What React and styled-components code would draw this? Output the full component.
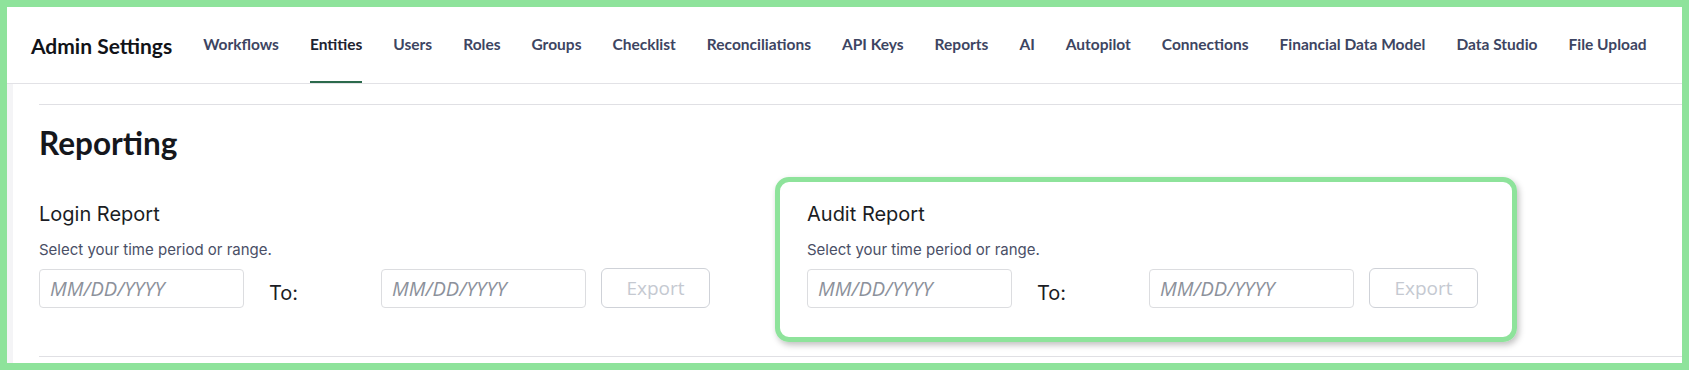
import React from 'react'
import styled, { createGlobalStyle } from 'styled-components'

const tabs = [
  'Workflows', 'Entities', 'Users', 'Roles', 'Groups', 'Checklist',
  'Reconciliations', 'API Keys', 'Reports', 'AI', 'Autopilot',
  'Connections', 'Financial Data Model', 'Data Studio', 'File Upload'
]

const reports = [
  { title: 'Login Report', highlighted: false },
  { title: 'Audit Report', highlighted: true }
]

export default function App () {
  return (
    <>
      <GlobalStyle />
      <Frame>
        <Header>
          <HeaderTitle>Admin Settings</HeaderTitle>
          <Tabs>
            {tabs.map(tab => (
              <Tab key={tab} active={tab === 'Entities'}>{tab}</Tab>
            ))}
          </Tabs>
        </Header>
        <Body>
          <Strip />
          <Content>
            <Rule />
            <PageTitle>Reporting</PageTitle>
            <Columns>
              {reports.map(report => (
                <ReportBlock key={report.title} highlighted={report.highlighted}>
                  <ReportTitle>{report.title}</ReportTitle>
                  <ReportHint>Select your time period or range.</ReportHint>
                  <DateRow>
                    <DateInput placeholder='MM/DD/YYYY' />
                    <ToLabel>To:</ToLabel>
                    <DateInput placeholder='MM/DD/YYYY' />
                    <ExportButton disabled>Export</ExportButton>
                  </DateRow>
                </ReportBlock>
              ))}
            </Columns>
            <Rule />
          </Content>
        </Body>
      </Frame>
    </>
  )
}

const GlobalStyle = createGlobalStyle`
  html, body {
    margin: 0;
    padding: 0;
    background: #fff;
  }
  * {
    box-sizing: border-box;
  }
`

const Frame = styled.div`
  height: 370px;
  border: 7px solid #8ee39b;
  background: #fff;
  display: flex;
  flex-direction: column;
  overflow: hidden;
`

const Header = styled.header`
  height: 77px;
  display: flex;
  align-items: stretch;
  padding-left: 24px;
  border-bottom: 1px solid #e2e2e6;
  flex-shrink: 0;
`

const HeaderTitle = styled.h1`
  margin: 0 31px 0 0;
  align-self: center;
  font-family: Lato, "Liberation Sans", sans-serif;
  font-weight: 700;
  font-size: 21px;
  color: #111318;
  white-space: nowrap;
`

const Tabs = styled.nav`
  display: flex;
  gap: 31px;
`

const Tab = styled.div`
  display: flex;
  align-items: center;
  border-bottom: 2px solid ${p => (p.active ? '#2b6a4c' : 'transparent')};
  font-family: Lato, "Liberation Sans", sans-serif;
  font-weight: 700;
  font-size: 15.5px;
  color: ${p => (p.active ? '#1d2230' : '#3d4562')};
  white-space: nowrap;
`

const Body = styled.div`
  flex: 1;
  display: flex;
`

const Strip = styled.div`
  width: 6px;
  background: #f4f4f6;
`

const Content = styled.main`
  flex: 1;
  padding: 20px 0 0 26px;
`

const Rule = styled.hr`
  margin: 0;
  border: 0;
  border-top: 1px solid #e0e0e4;
`

const PageTitle = styled.h2`
  margin: 20px 0 0;
  font-family: Lato, "Liberation Sans", sans-serif;
  font-weight: 700;
  font-size: 31.5px;
  line-height: 36px;
  color: #15171c;
`

const Columns = styled.div`
  display: flex;
  margin-top: 41px;
  padding-bottom: 48px;
`

const ReportBlock = styled.section`
  position: relative;
  flex: 0 0 768px;
  &:last-child {
    flex: 0 0 auto;
  }
  ${p => p.highlighted && `
    &::after {
      content: '';
      position: absolute;
      left: -32px;
      right: -39px;
      top: -25px;
      bottom: -34px;
      border: 5px solid #8ee39b;
      border-radius: 14px;
      box-shadow: 2px 3px 6px rgba(0, 0, 0, 0.25);
      pointer-events: none;
    }
  `}
`

const ReportTitle = styled.h3`
  margin: 0;
  font-family: Inter, "Liberation Sans", sans-serif;
  font-weight: 400;
  font-size: 20px;
  line-height: 24px;
  color: #1b1d24;
`

const ReportHint = styled.p`
  margin: 14px 0 0;
  font-family: Inter, "Liberation Sans", sans-serif;
  font-size: 15px;
  line-height: 20px;
  color: #4a4f66;
`

const DateRow = styled.div`
  display: flex;
  align-items: center;
  margin-top: 8px;
`

const DateInput = styled.input`
  width: 205px;
  height: 39px;
  padding: 0 10px;
  border: 1px solid #dcdde0;
  border-radius: 4px;
  font-family: "Open Sans", "Liberation Sans", sans-serif;
  font-size: 20px;
  font-style: italic;
  color: #333;
  outline: none;
  &::placeholder {
    color: #8c919b;
  }
`

const ToLabel = styled.span`
  width: 137px;
  padding: 10px 0 0 25px;
  font-family: Inter, "Liberation Sans", sans-serif;
  font-size: 20px;
  color: #1b1d24;
`

const ExportButton = styled.button`
  margin-left: 15px;
  width: 109px;
  height: 40px;
  border: 1px solid #cfd2d8;
  border-radius: 6px;
  background: #fff;
  font-family: "Open Sans", "Liberation Sans", sans-serif;
  font-size: 19px;
  color: #c5c9d1;
`
